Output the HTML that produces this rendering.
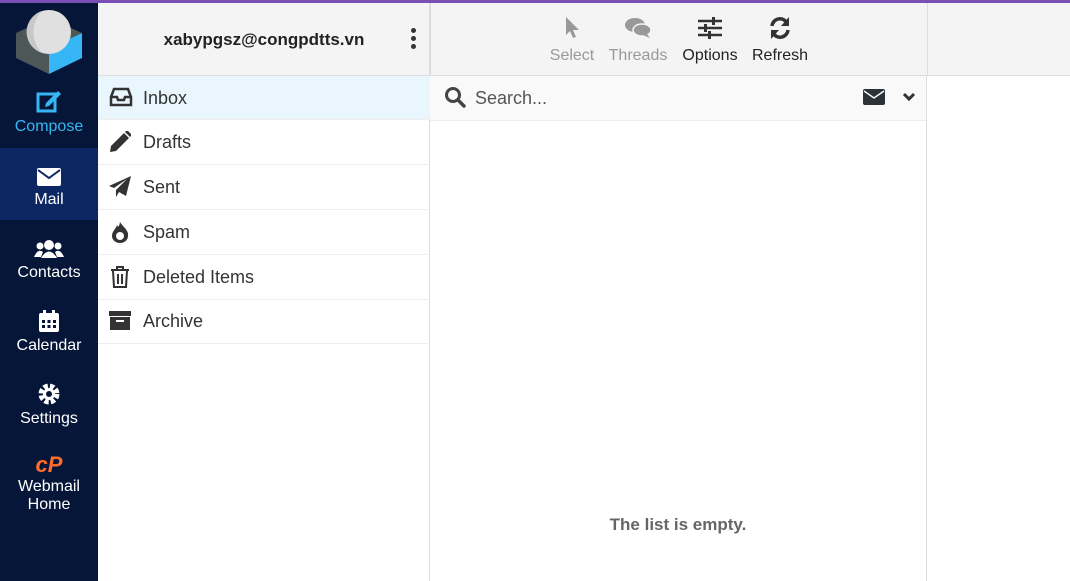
<!DOCTYPE html>
<html><head><style>
*{margin:0;padding:0;box-sizing:border-box}
body{width:1070px;height:581px;overflow:hidden;font-family:"Liberation Sans",sans-serif;background:#fff;position:relative}
.top{position:absolute;left:0;top:0;width:1070px;height:3px;background:#7a4fb5}
.side{position:absolute;left:0;top:3px;width:98px;height:578px;background:#061638}
.nav{position:absolute;left:0;width:98px;text-align:center;color:#fff;font-size:16px}
.nav svg{display:block;margin:0 auto 5px}
.hdr{position:absolute;top:3px;height:73px;background:#f4f4f4;border-bottom:1px solid #ddd}
.fold{position:absolute;left:98px;width:332px;height:45px;border-bottom:1px solid #eee;font-size:18px;color:#333;line-height:44px;padding-left:45px}
.fold svg{position:absolute;left:11px;top:11px}
.tb{position:absolute;top:14px;text-align:center;font-size:16px}
.tb svg{display:block;margin:0 auto 8px}
</style></head><body>
<div class="top"></div>
<div class="side">
<svg style="position:absolute;left:16px;top:5px" width="66" height="66" viewBox="0 0 66 66"><polygon points="0,25 33,40 33,66 0,50" fill="#4d5758"/><polygon points="66,25 33,40 33,66 66,50" fill="#37b6f5"/><polygon points="0,25 33,10 66,25 33,40" fill="#4d5758"/><circle cx="33" cy="24" r="22" fill="#e0e0e0"/><path d="M26,3 A22,22 0 0 0 26,45 A30,30 0 0 1 26,3z" fill="#c8c8c8"/></svg>
<div class="nav" style="top:86px;color:#37b6f5"><svg width="26" height="24" viewBox="0 0 26 24"><rect x="2" y="5" width="17" height="17" fill="none" stroke="#37b6f5" stroke-width="3"/><path d="M10 14 L22 2 L25 5 L13 17 L9 18z" fill="#37b6f5"/></svg>Compose</div>
<div style="position:absolute;left:0;top:145px;width:98px;height:72px;background:#0c2762"></div>
<div class="nav" style="top:165px"><svg width="24" height="18" viewBox="0 0 24 18"><rect width="24" height="18" rx="2" fill="#fff"/><path d="M1 2 L12 10 L23 2" stroke="#0c2762" stroke-width="2" fill="none"/></svg>Mail</div>
<div class="nav" style="top:236px"><svg width="30" height="20" viewBox="0 0 30 20"><circle cx="15" cy="6" r="5" fill="#fff"/><circle cx="6" cy="7" r="3.5" fill="#fff"/><circle cx="24" cy="7" r="3.5" fill="#fff"/><path d="M7 19 Q15 6 23 19z M0 18 Q4 9 9 13 L7 18z M30 18 Q26 9 21 13 L23 18z" fill="#fff"/></svg>Contacts</div>
<div class="nav" style="top:307px"><svg width="22" height="22" viewBox="0 0 22 22"><rect x="1" y="3" width="20" height="19" rx="2" fill="#fff"/><rect x="5" y="0" width="3" height="5" fill="#fff"/><rect x="14" y="0" width="3" height="5" fill="#fff"/><g fill="#061638"><rect x="4" y="10" width="3" height="3"/><rect x="9.5" y="10" width="3" height="3"/><rect x="15" y="10" width="3" height="3"/><rect x="4" y="15" width="3" height="3"/><rect x="9.5" y="15" width="3" height="3"/><rect x="15" y="15" width="3" height="3"/></g></svg>Calendar</div>
<div class="nav" style="top:380px"><svg width="22" height="22" viewBox="0 0 22 22"><circle cx="11" cy="11" r="7.5" fill="none" stroke="#fff" stroke-width="6" stroke-dasharray="4 2"/><circle cx="11" cy="11" r="6" fill="#fff"/><circle cx="11" cy="11" r="3" fill="#061638"/></svg>Settings</div>
<div class="nav" style="top:451px;line-height:18px"><div style="color:#ff6c2c;font-weight:bold;font-style:italic;font-size:22px;line-height:22px;margin-bottom:2px">cP</div>Webmail<br>Home</div>
</div>
<div class="hdr" style="left:98px;width:332px;border-right:1px solid #ddd"><div style="position:absolute;left:0;width:332px;top:27px;text-align:center;font-weight:bold;font-size:17px;color:#222">xabypgsz@congpdtts.vn</div>
<div style="position:absolute;left:313px;top:25px;width:5px"><div style="width:5px;height:5px;border-radius:3px;background:#333;margin-bottom:3px"></div><div style="width:5px;height:5px;border-radius:3px;background:#333;margin-bottom:3px"></div><div style="width:5px;height:5px;border-radius:3px;background:#333"></div></div></div>
<div class="hdr" style="left:430px;width:640px;border-left:1px solid #ddd">
<div style="position:absolute;left:496px;top:0;height:73px;border-left:1px solid #ddd"></div>
<div class="tb" style="left:118px;width:46px;color:#999"><svg width="16" height="22" viewBox="0 0 16 22"><path d="M2 0 L2 18 L6 14 L9 21 L12 20 L9 13 L15 13z" fill="#999"/></svg>Select</div>
<div class="tb" style="left:176px;width:62px;color:#999"><svg width="26" height="22" viewBox="0 0 26 22"><ellipse cx="10" cy="8" rx="10" ry="7" fill="#999"/><ellipse cx="17" cy="13" rx="9" ry="6" fill="#999" stroke="#f4f4f4" stroke-width="1.5"/><path d="M22 17 L25 21 L18 18z" fill="#999"/></svg>Threads</div>
<div class="tb" style="left:250px;width:58px;color:#222"><svg width="24" height="22" viewBox="0 0 24 22"><g stroke="#333" stroke-width="2.5"><path d="M0 4H24M0 11H24M0 18H24"/></g><g fill="#333"><rect x="14" y="0" width="3" height="8"/><rect x="6" y="7" width="3" height="8"/><rect x="10" y="14" width="3" height="8"/></g></svg>Options</div>
<div class="tb" style="left:320px;width:58px;color:#222"><svg width="24" height="22" viewBox="0 0 24 22"><path d="M4 9 A8 8 0 0 1 19 6" stroke="#333" stroke-width="3.5" fill="none"/><path d="M21 0 V9 H13z" fill="#333"/><path d="M20 13 A8 8 0 0 1 5 16" stroke="#333" stroke-width="3.5" fill="none"/><path d="M3 22 V13 H11z" fill="#333"/></svg>Refresh</div>
</div>
<div style="position:absolute;left:429px;top:76px;width:1px;height:505px;background:#ddd"></div>
<div style="position:absolute;left:926px;top:76px;width:1px;height:505px;background:#ddd"></div>
<div class="fold" style="top:76px;background:#eaf6fd;height:44px"><svg width="24" height="20" viewBox="0 0 24 20"><path d="M2 10 L5 2 H19 L22 10 V18 H2z" fill="none" stroke="#333" stroke-width="2.5"/><path d="M2 10 H8 L9 13 H15 L16 10 H22" fill="none" stroke="#333" stroke-width="2.5"/></svg>Inbox</div>
<div class="fold" style="top:120px"><svg width="22" height="22" viewBox="0 0 22 22"><path d="M1 21 L2 15 L15 2 L20 7 L7 20z" fill="#333"/><path d="M16 1 L18 -1 L23 4 L21 6z" fill="#333"/></svg>Drafts</div>
<div class="fold" style="top:165px"><svg width="22" height="22" viewBox="0 0 22 22"><path d="M0 10 L22 0 L17 20 L10 16 L7 21 L7 14 L18 3 L5 12z" fill="#333"/></svg>Sent</div>
<div class="fold" style="top:210px"><svg width="22" height="22" viewBox="0 0 22 22"><path d="M11 1 C13 5 20 9 19 15 A8 7 0 0 1 3 15 C3 10 7 8 8 4 C9 6 10 7 11 1z" fill="#333"/><circle cx="11" cy="15" r="4" fill="#fff"/></svg>Spam</div>
<div class="fold" style="top:255px"><svg width="22" height="22" viewBox="0 0 22 22"><path d="M2 4H20M8 4V1H14V4" stroke="#333" stroke-width="2" fill="none"/><path d="M4 5 L5 21 H17 L18 5" stroke="#333" stroke-width="2" fill="none"/><path d="M9 8V18M13 8V18" stroke="#333" stroke-width="2"/></svg>Deleted Items</div>
<div class="fold" style="top:299px"><svg width="22" height="22" viewBox="0 0 22 22"><rect x="0" y="1" width="22" height="5" fill="#333"/><rect x="1" y="7" width="20" height="13" fill="#333"/><rect x="7" y="10" width="8" height="2" fill="#fff"/></svg>Archive</div>
<div style="position:absolute;left:430px;top:76px;width:496px;height:45px;background:#f9f9f9;border-bottom:1px solid #eee">
<svg style="position:absolute;left:14px;top:10px" width="22" height="22" viewBox="0 0 22 22"><circle cx="9" cy="9" r="6.5" stroke="#444" stroke-width="3" fill="none"/><path d="M14 14 L20 20" stroke="#444" stroke-width="3.5" stroke-linecap="round"/></svg>
<div style="position:absolute;left:45px;top:12px;font-size:18px;color:#555">Search...</div>
<svg style="position:absolute;left:433px;top:13px" width="22" height="16" viewBox="0 0 22 16"><rect width="22" height="16" rx="2" fill="#2b3338"/><path d="M1 2 L11 9 L21 2" stroke="#f9f9f9" stroke-width="1.5" fill="none"/></svg>
<svg style="position:absolute;left:472px;top:16px" width="14" height="10" viewBox="0 0 14 10"><path d="M2 2 L7 7 L12 2" stroke="#2b3338" stroke-width="3" fill="none"/></svg>
</div>
<div style="position:absolute;left:430px;width:496px;top:515px;text-align:center;font-weight:bold;font-size:17px;color:#666">The list is empty.</div>
</body></html>
